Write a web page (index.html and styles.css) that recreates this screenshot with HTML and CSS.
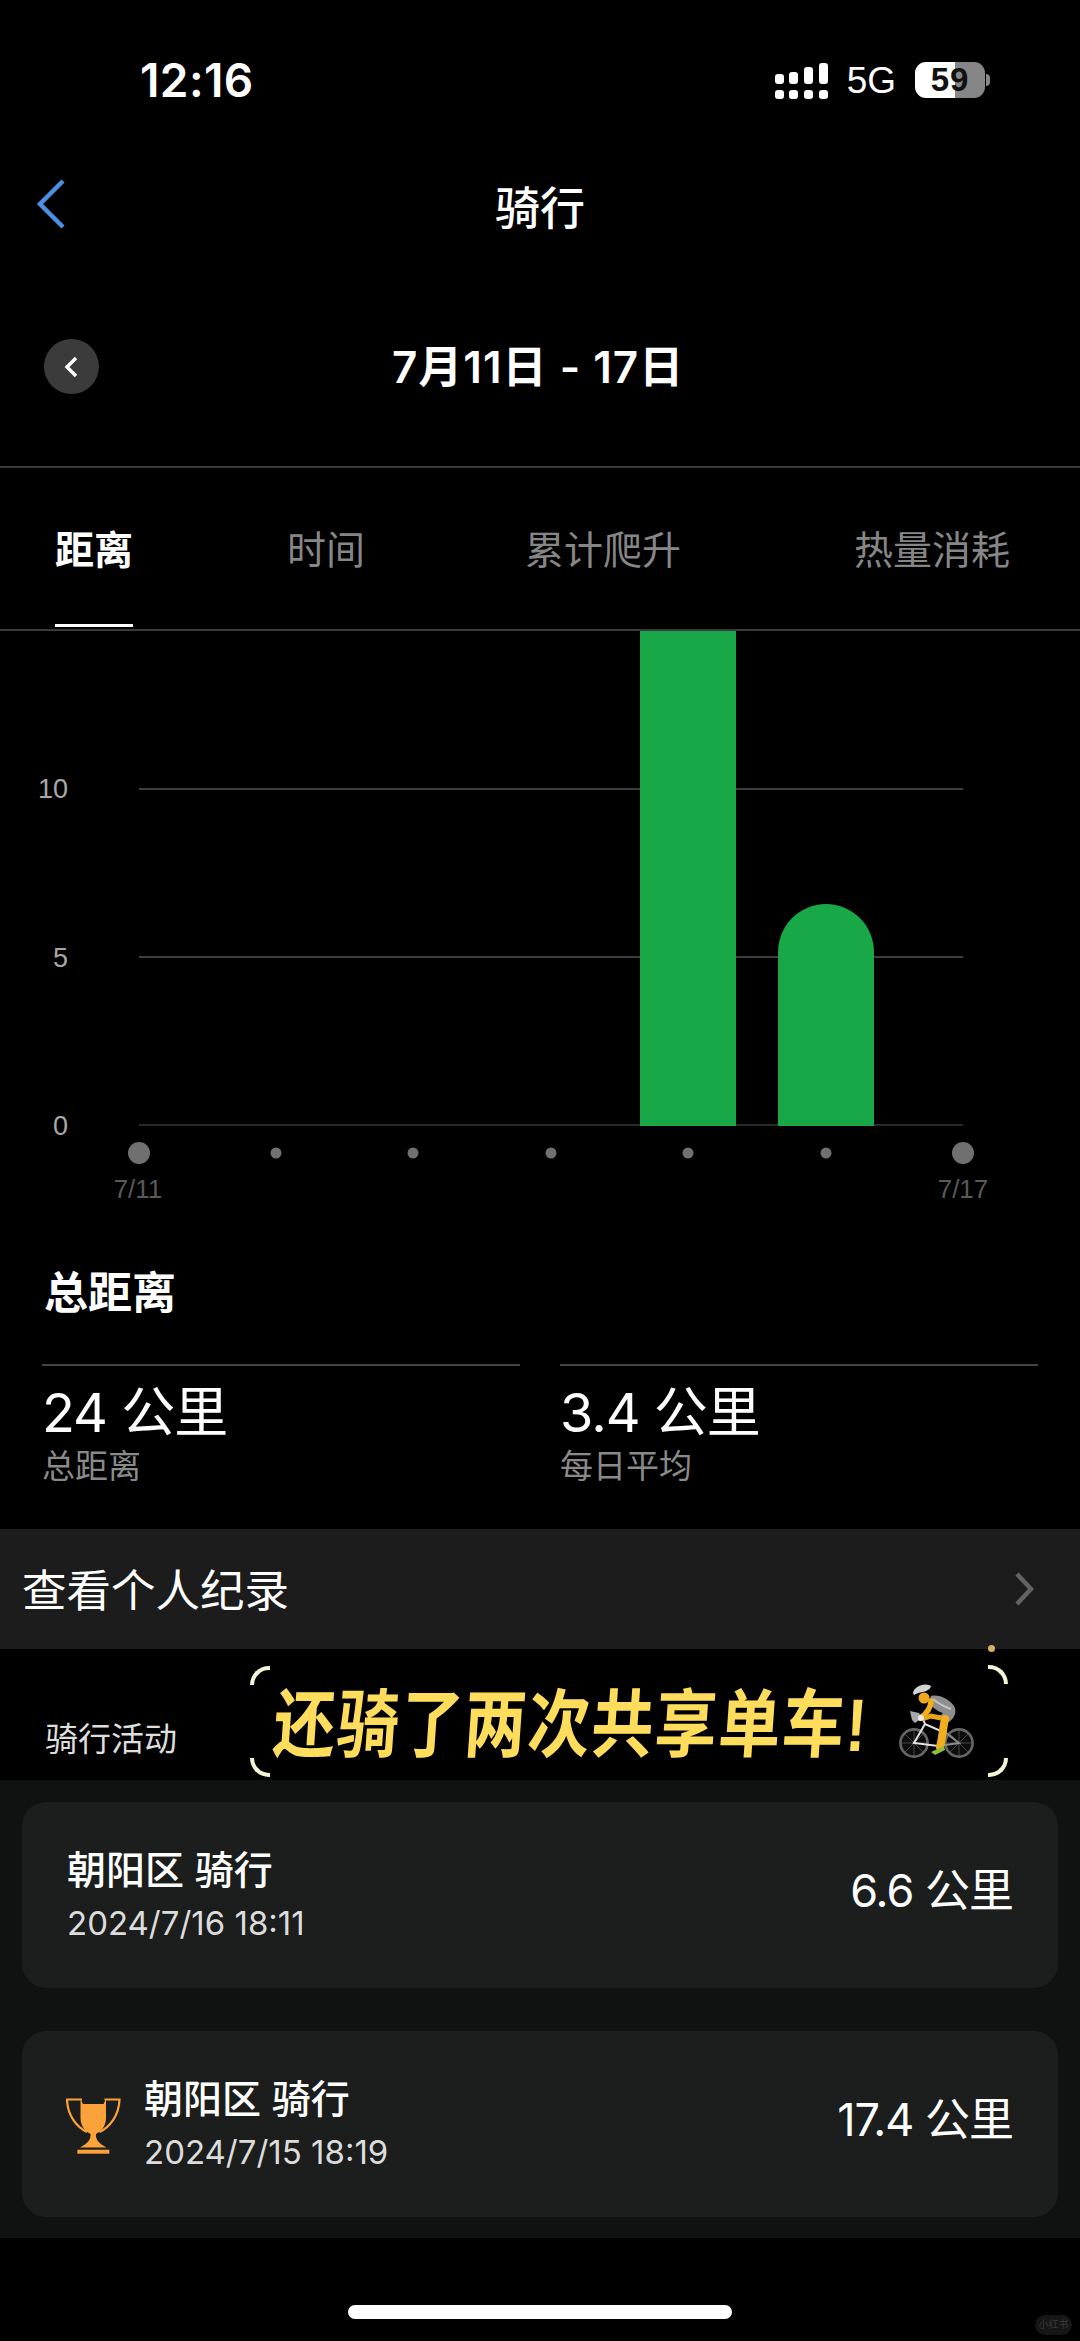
FILE: index.html
```html
<!DOCTYPE html>
<html lang="zh-CN">
<head>
<meta charset="utf-8">
<title>骑行</title>
<link rel="stylesheet" href="styles.css">
</head>
<body>
<div class="page">
  <header class="status">
    <span class="time">12:16</span>
    <div class="status-right">
      <svg class="signal" width="54" height="36" viewBox="0 0 54 36" aria-hidden="true">
        <g fill="#fff">
          <rect x="0" y="27" width="9" height="9" rx="3"/><rect x="14" y="27" width="9" height="9" rx="3"/><rect x="29" y="27" width="9" height="9" rx="3"/><rect x="44" y="27" width="9" height="9" rx="3"/>
          <rect x="0" y="11" width="9" height="10" rx="3"/><rect x="14" y="9" width="9" height="12" rx="3"/><rect x="29" y="4" width="9" height="17" rx="3"/><rect x="44" y="0" width="9" height="21" rx="3"/>
        </g>
      </svg>
      <span class="net">5G</span>
      <div class="battery"><span class="battery-num">59</span></div>
      <span class="battery-nub"></span>
    </div>
  </header>

  <nav class="nav">
    <svg class="back" width="30" height="50" viewBox="0 0 30 50" aria-hidden="true"><path d="M27 2 L4 25 L27 48" fill="none" stroke="#4a90e2" stroke-width="4.5"/></svg>
    <h1 class="nav-title">骑行</h1>
  </nav>

  <div class="date-row">
    <span class="date-btn">
      <svg width="18" height="22" viewBox="0 0 18 22" aria-hidden="true"><path d="M13 2 L4 11 L13 20" fill="none" stroke="#fff" stroke-width="3.4"/></svg>
    </span>
    <span class="date-text">7月11日 - 17日</span>
  </div>

  <div class="tabs">
    <span class="tab tab-active">距离</span>
    <span class="tab">时间</span>
    <span class="tab">累计爬升</span>
    <span class="tab">热量消耗</span>
  </div>

  <svg class="chart" width="1080" height="609" viewBox="0 631 1080 609" role="img" aria-label="距离图表">
    <line class="grid" x1="139" x2="963" y1="789" y2="789"/>
    <line class="grid" x1="139" x2="963" y1="957" y2="957"/>
    <line class="grid-base" x1="139" x2="963" y1="1125" y2="1125"/>
    <text class="axis" x="68" y="798" text-anchor="end">10</text>
    <text class="axis" x="68" y="967" text-anchor="end">5</text>
    <text class="axis" x="68" y="1135" text-anchor="end">0</text>
    <rect class="bar" x="640" y="631" width="96" height="495"/>
    <path class="bar" d="M778 1126 V952 A48 48 0 0 1 874 952 V1126 Z"/>
    <circle class="dot" cx="139" cy="1153" r="11"/>
    <circle class="dot" cx="276" cy="1153" r="5.5"/>
    <circle class="dot" cx="413" cy="1153" r="5.5"/>
    <circle class="dot" cx="551" cy="1153" r="5.5"/>
    <circle class="dot" cx="688" cy="1153" r="5.5"/>
    <circle class="dot" cx="826" cy="1153" r="5.5"/>
    <circle class="dot" cx="963" cy="1153" r="11"/>
    <text class="date-tick" x="138" y="1198" text-anchor="middle">7/11</text>
    <text class="date-tick" x="963" y="1198" text-anchor="middle">7/17</text>
  </svg>

  <section class="totals">
    <h2 class="totals-title">总距离</h2>
    <div class="stats">
      <div class="stat">
        <div class="stat-value">24 公里</div>
        <div class="stat-label">总距离</div>
      </div>
      <div class="stat">
        <div class="stat-value">3.4 公里</div>
        <div class="stat-label">每日平均</div>
      </div>
    </div>
  </section>

  <div class="records">
    <span class="records-text">查看个人纪录</span>
    <svg width="20" height="34" viewBox="0 0 20 34" aria-hidden="true"><path d="M3 2 L17 17 L3 32" fill="none" stroke="#636363" stroke-width="4.5"/></svg>
  </div>

  <div class="activity">
    <span class="activity-label">骑行活动</span>
    <div class="banner">
      <span class="corner corner-tl"></span>
      <span class="corner corner-tr"></span>
      <span class="corner corner-bl"></span>
      <span class="corner corner-br"></span>
      <span class="spark"></span>
      <span class="banner-text">还骑了两次共享单车!</span>
      <svg class="rider" width="75" height="75" viewBox="40 45 75 75" aria-hidden="true">
        <g fill="#0c0c0c" stroke="#666" stroke-width="2.6">
          <circle cx="55" cy="104" r="13.6"/>
          <circle cx="100" cy="104" r="13.6"/>
        </g>
        <g stroke="#555" stroke-width=".8">
          <path d="M55 91 V117 M42 104 H68 M46 95 L64 113 M64 95 L46 113"/>
          <path d="M100 91 V117 M87 104 H113 M91 95 L109 113 M109 95 L91 113"/>
        </g>
        <g fill="none" stroke="#e4e4e4" stroke-width="2">
          <path d="M55 104 L66 85 L82 92 L79 107 Z"/>
          <path d="M66 85 L64 80"/>
          <path d="M82 90 L100 104 L79 107" stroke="#8c8c8c"/>
        </g>
        <path d="M72 57 C80 55 90 60 95 67 C98 72 96 79 90 83 L84 84 L80 78 L84 74 C78 72 72 68 70 62 Z" fill="#8e8e8e"/>
        <path d="M74 60 C80 65 86 68 92 70" fill="none" stroke="#c4c4c4" stroke-width="2"/>
        <path d="M72 62 C72 68 68 75 61 79" fill="none" stroke="#f1ae1e" stroke-width="5.5" stroke-linecap="round"/>
        <path d="M63 80 L72 77 L82 79" fill="none" stroke="#e8a51c" stroke-width="5"/>
        <path d="M86 80 C84 88 84 96 81 108" fill="none" stroke="#f1ae1e" stroke-width="8" stroke-linecap="round"/>
        <path d="M72 113 L85 107 L86 111 L76 116 Z" fill="#8fbf3a"/>
        <path d="M51 72 L60 74 L63 79 L56 84 L53 81 Z" fill="#a8a8a8"/>
        <circle cx="62" cy="79" r="3" fill="#eee"/>
        <circle cx="65" cy="59" r="5.5" fill="#efa81d"/>
        <path d="M54 54 C55 48 63 44 70 46 L72 47 C71 51 66 53 59 54 L55 56 Z" fill="#d4d4d4"/>
      </svg>
    </div>
  </div>

  <section class="list">
    <article class="card">
      <div class="card-main">
        <div class="card-title">朝阳区 骑行</div>
        <div class="card-date">2024/7/16 18:11</div>
      </div>
      <div class="card-value">6.6 公里</div>
    </article>
    <article class="card">
      <svg class="trophy" width="55" height="56" viewBox="26 26 55 56" aria-hidden="true">
        <path d="M40.5 27 L43 32 H63.5 L66 27 V46 C66 55 60 60 56 62 C55.5 67 58 71 66.5 75.5 H40 C48.5 71 51 67 50.5 62 C46.5 60 40.5 55 40.5 46 Z" fill="#fba23a"/>
        <rect x="37.3" y="77.7" width="32" height="4" fill="#fba23a"/>
        <path d="M42 27.5 H27 C27.5 44 37 55 47 60 M64.5 27.5 H79.5 C79 44 69.5 55 59.5 60" fill="none" stroke="#fba23a" stroke-width="2.2"/>
      </svg>
      <div class="card-main">
        <div class="card-title">朝阳区 骑行</div>
        <div class="card-date">2024/7/15 18:19</div>
      </div>
      <div class="card-value">17.4 公里</div>
    </article>
  </section>

  <div class="home-bar"></div>
  <span class="watermark">小红书</span>
</div>
</body>
</html>
```

FILE: styles.css
```css
* { box-sizing: border-box; }
html, body { margin: 0; padding: 0; background: #000; }
.page {
  position: relative;
  width: 1080px;
  height: 2341px;
  overflow: hidden;
  background: #000;
  color: #fff;
  display: flex;
  flex-direction: column;
  font-family: "Liberation Sans", "Noto Sans CJK SC", sans-serif;
}

/* status bar */
.status {
  height: 160px;
  flex: none;
  display: flex;
  align-items: center;
  justify-content: space-between;
  padding: 0 90px 0 140px;
}
.time { font-family: Inter, sans-serif; font-size: 46px; font-weight: 600; letter-spacing: .4px; }
.status-right { display: flex; align-items: center; }
.signal { margin-right: 18px; margin-top: 2px; }
.net { font-size: 37px; margin-right: 19px; margin-top: 2px; }
.battery {
  width: 70px;
  height: 36px;
  border-radius: 11px;
  background: linear-gradient(90deg, #fff 0 40px, #868686 40px);
  display: flex;
  align-items: center;
  justify-content: center;
}
.battery-num { font-size: 33px; font-weight: 700; color: #111; letter-spacing: 1px; }
.battery-nub {
  width: 4px;
  height: 12px;
  margin-left: 1px;
  border-radius: 0 6px 6px 0;
  background: #868686;
}

/* nav */
.nav {
  height: 96px;
  flex: none;
  display: flex;
  align-items: center;
  justify-content: center;
  position: relative;
}
.back { position: absolute; left: 36px; top: 19px; }
.nav-title { margin: -6px 0 0; font-size: 45px; font-weight: 500; }

.date-row {
  height: 212px;
  flex: none;
  padding: 11px 0 0 44px;
  display: flex;
  align-items: center;
  border-bottom: 2px solid #3a3a3a;
}
.date-btn {
  width: 55px;
  height: 55px;
  border-radius: 50%;
  background: #3b3b3b;
  display: flex;
  align-items: center;
  justify-content: center;
  flex: none;
}
.date-text {
  margin: -5px 0 0 293px;
  font-family: Inter, "Noto Sans CJK SC", sans-serif;
  font-size: 44px;
  font-weight: 600;
  letter-spacing: 1px;
  white-space: nowrap;
}

/* tabs */
.tabs {
  height: 163px;
  flex: none;
  padding: 0 0 2px 55px;
  display: grid;
  grid-template-columns: 232px 238px 329px auto;
  border-bottom: 2px solid #3a3a3a;
}
.tab {
  justify-self: start;
  display: flex;
  align-items: center;
  font-size: 39px;
  padding-bottom: 2px;
  color: #868686;
}
.tab-active { color: #fff; font-weight: 700; box-shadow: inset 0 -3px #fff; }

/* chart */
.chart { display: block; flex: none; }
.grid { stroke: #3d3d3d; stroke-width: 2; }
.grid-base { stroke: #2a2a2a; stroke-width: 2; }
.axis { fill: #a8a8a8; font-size: 27px; font-family: "Liberation Sans", sans-serif; }
.date-tick { fill: #5a5a5a; font-size: 26px; font-family: "Liberation Sans", sans-serif; }
.bar { fill: #18a848; }
.dot { fill: #707070; }

/* totals */
.totals { height: 289px; flex: none; padding: 32px 42px 0; }
.totals-title { margin: 0 0 0 2px; font-size: 44px; line-height: 44px; font-weight: 700; }
.stats { display: grid; grid-template-columns: 478px 478px; column-gap: 40px; margin-top: 48px; }
.stat { border-top: 2px solid #444; padding: 14px 0 0 0; }
.stat-value { font-family: Inter, "Noto Sans CJK SC", sans-serif; font-size: 54px; line-height: 66px; letter-spacing: -1px; white-space: nowrap; }
.stat-label { font-size: 33px; line-height: 40px; color: #8a8a8a; margin-top: 1px; }

/* records */
.records {
  height: 120px;
  flex: none;
  background: #1c1c1c;
  display: flex;
  align-items: center;
  justify-content: space-between;
  padding: 0 46px 0 22px;
}
.records-text { font-size: 44.5px; margin-top: -3px; }

/* activity header with sticker */
.activity {
  height: 131px;
  flex: none;
  padding-left: 45px;
  display: flex;
  align-items: flex-start;
  position: relative;
}
.activity-label { font-size: 33px; line-height: 40px; margin-top: 71px; color: #dedede; white-space: nowrap; }
.banner {
  position: relative;
  width: 758px;
  height: 112px;
  margin: 16px 0 0 73px;
  padding-left: 24px;
  display: flex;
  align-items: center;
}
.banner-text {
  font-size: 62px;
  font-weight: 700;
  color: #ffdd5c;
  white-space: nowrap;
  letter-spacing: 1.6px;
  margin-top: -5px;
  transform: skewX(-4deg) scaleY(1.2);
  transform-origin: left center;
}
.rider { position: absolute; left: 649px; top: 19px; }
.corner { position: absolute; width: 20px; height: 19px; border: 0 solid #f6f3d7; }
.corner-tl { left: 0; top: 1px; border-width: 4px 0 0 4px; border-top-left-radius: 20px; }
.corner-tr { right: 0; top: 0; border-width: 4px 4px 0 0; border-top-right-radius: 20px; }
.corner-bl { left: 0; bottom: 0; border-width: 0 0 4px 4px; border-bottom-left-radius: 20px; }
.corner-br { right: 0; bottom: 0; border-width: 0 4px 4px 0; border-bottom-right-radius: 20px; }
.spark { position: absolute; right: 13px; top: -20px; width: 7px; height: 7px; border-radius: 50%; background: #d8b060; }

/* list */
.list {
  height: 458px;
  flex: none;
  background: #101111;
  padding: 22px 22px 0;
  display: flex;
  flex-direction: column;
  gap: 43px;
}
.card {
  height: 186px;
  flex: none;
  border-radius: 24px;
  background: #1c1d1d;
  padding: 0 45px 0 45px;
  display: flex;
  align-items: center;
}
.trophy { margin: 3px 23px 0 -1px; flex: none; }
.card-main { flex: 1; margin-top: 1px; }
.card-title { font-size: 39px; line-height: 46px; font-weight: 500; white-space: nowrap; }
.card-date { font-family: Inter, sans-serif; font-size: 33px; line-height: 40px; color: #dcdcdc; margin-top: 9px; white-space: nowrap; }
.card-value { font-family: Inter, "Noto Sans CJK SC", sans-serif; font-size: 45px; letter-spacing: -1px; margin-top: -15px; white-space: nowrap; }

/* bottom */
.home-bar {
  width: 384px;
  height: 14px;
  flex: none;
  margin: 67px auto 0;
  border-radius: 7px;
  background: #fff;
}
.watermark {
  position: absolute;
  right: 8px;
  bottom: 6px;
  width: 37px;
  height: 20px;
  border-radius: 10px;
  background: #161616;
  color: #3a3a3a;
  font-size: 10px;
  line-height: 20px;
  text-align: center;
}
```
